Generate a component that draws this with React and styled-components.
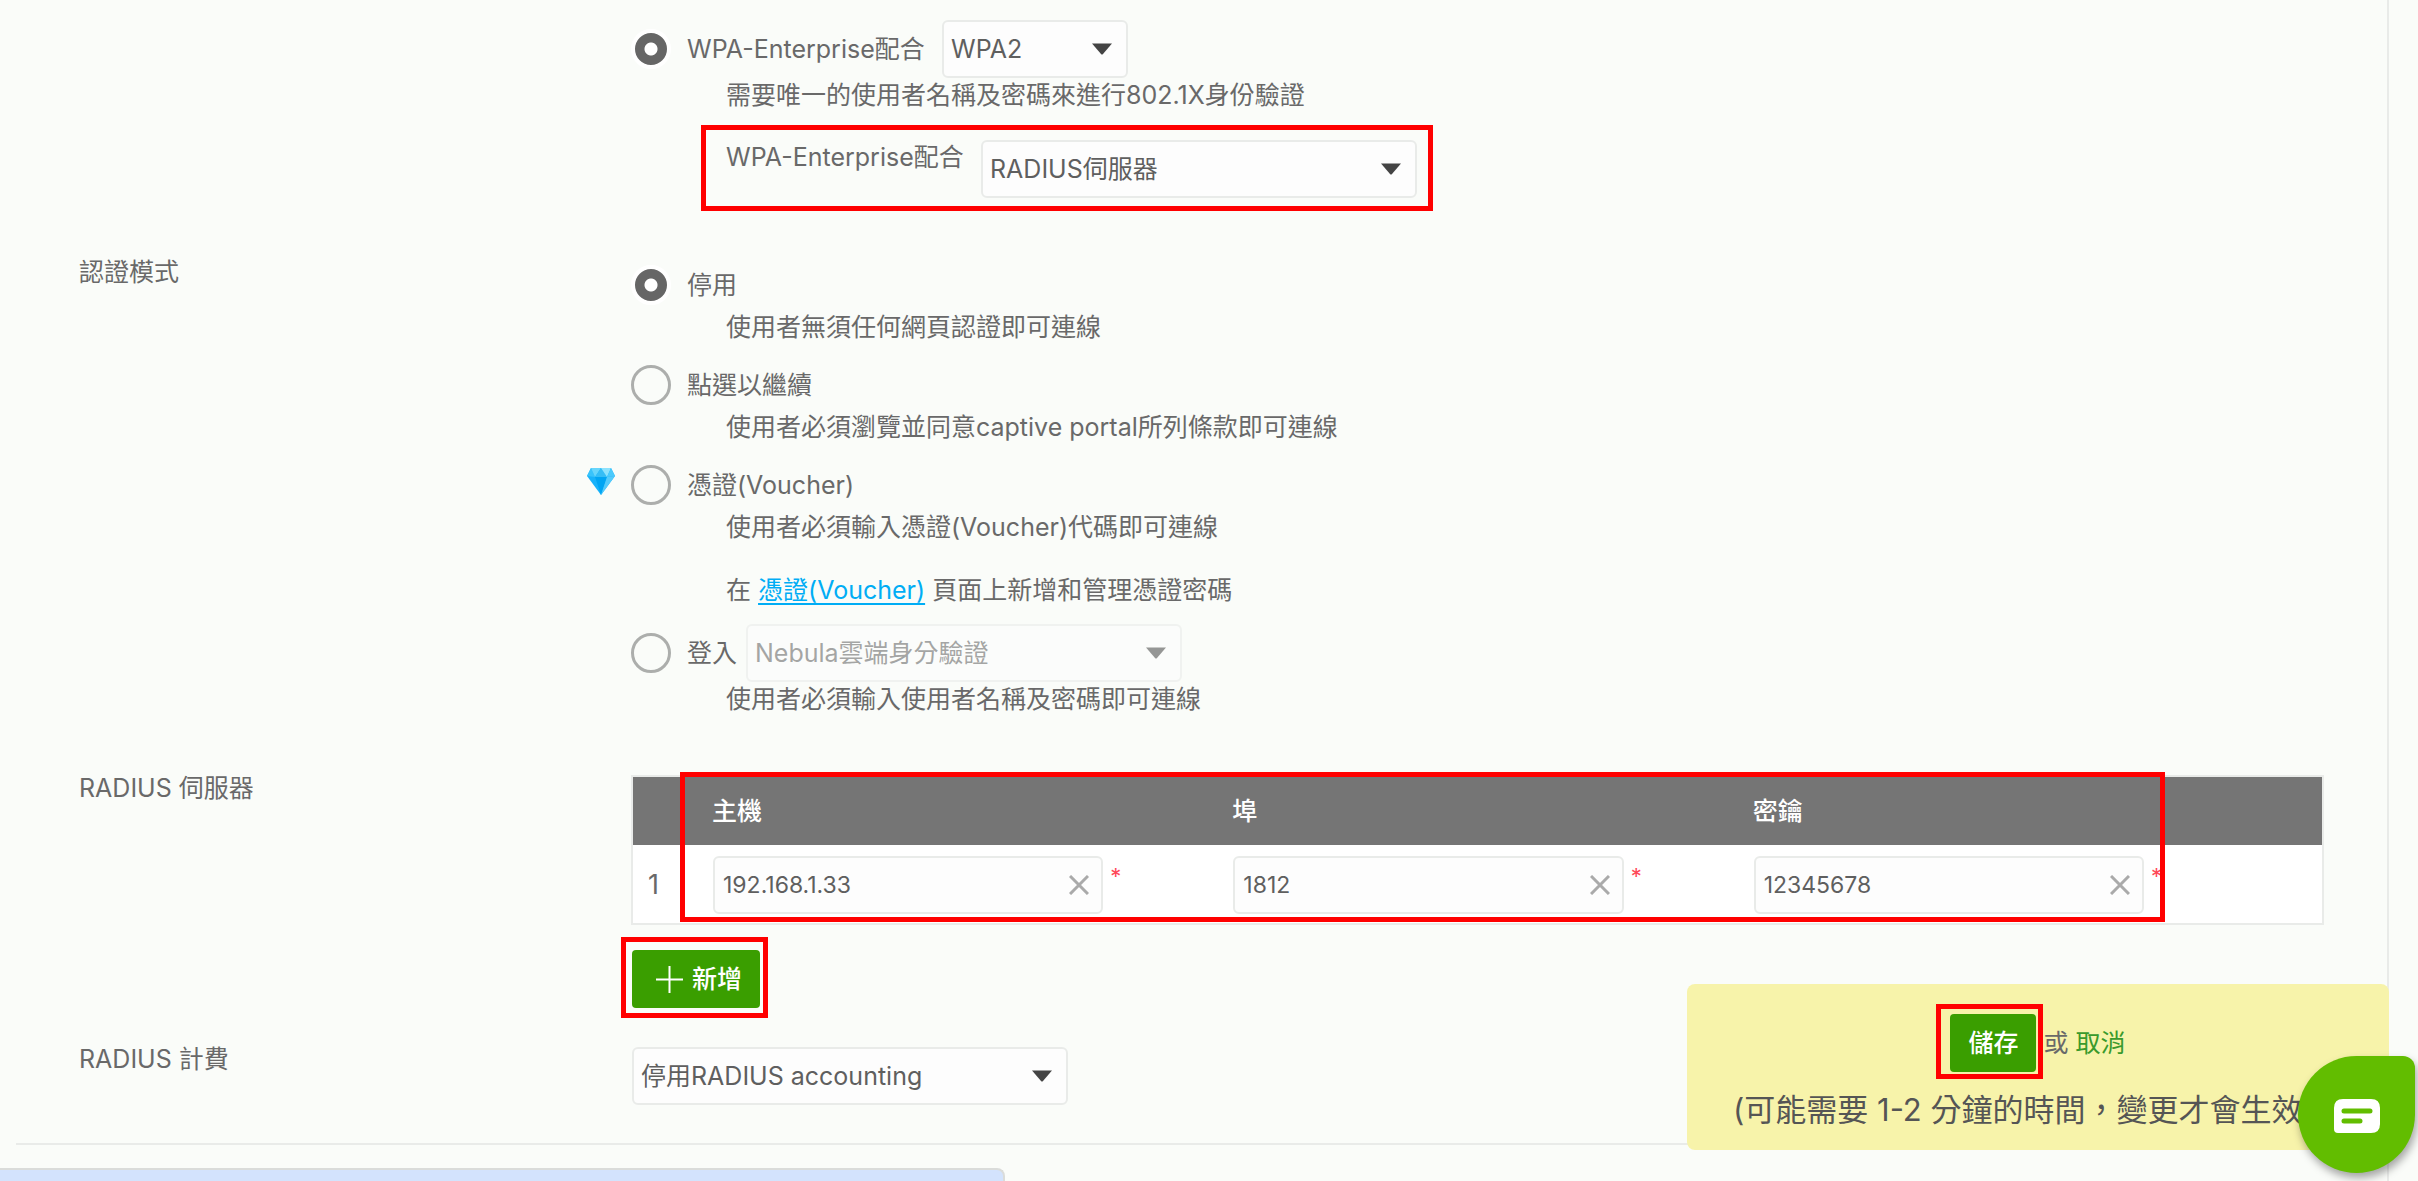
import React from "react";
import styled, { createGlobalStyle, css } from "styled-components";

const GlobalStyle = createGlobalStyle`
  * { box-sizing: border-box; }
  body {
    margin: 0;
    background: #fafcf9;
    color: #696969;
    font-family: Inter, "Noto Sans CJK TC", sans-serif;
    font-size: 25px;
    line-height: 34px;
  }
  button, input, select { font-family: inherit; }
`;

const Panel = styled.main`
  min-height: 100vh;
  margin-right: 29px;
  padding: 14px 0 0 16px;
  border-right: 2px solid #e9ebe9;
`;

const Settings = styled.form`
  padding-bottom: 38px;
  border-bottom: 2px solid #e9ebe9;
`;

const Section = styled.section`
  display: grid;
  grid-template-columns: 553px minmax(0, 1fr);
  padding: 0 64px 0 63px;
  margin-top: ${(p) => p.$gap || 0}px;
`;

const SectionTitle = styled.div`
  padding-top: 1px;
`;

const Controls = styled.div`
  display: flex;
  flex-direction: column;
  gap: 16px;
  padding-top: 6px;
`;

const OptionRow = styled.div`
  position: relative;
  display: flex;
  align-items: center;
  min-height: 50px;
`;

const Radio = styled.input.attrs({ type: "radio" })`
  appearance: none;
  flex: none;
  width: 40px;
  height: 40px;
  margin: 0 16px 0 -1px;
  border: 3px solid #acaeac;
  border-radius: 50%;
  &:checked {
    border: 4px solid #fff;
    background: radial-gradient(circle, #fff 0 6px, #666 7px);
  }
`;

const OptionLabel = styled.label`
  min-width: ${(p) => p.$width || 0}px;
  margin-right: 9px;
`;

const Hint = styled.p`
  margin: 0 0 0 94px;
`;

const Note = styled(Hint)`
  margin-top: 28px;
  line-height: 36px;
`;

const VoucherLink = styled.a`
  color: #00adf5;
  text-decoration: underline;
  text-decoration-thickness: 2px;
  text-underline-offset: 4px;
`;

const Nested = styled.div`
  position: relative;
  display: inline-flex;
  align-items: flex-start;
  margin: 28px 0 0 94px;
`;

const Premium = styled.svg`
  position: absolute;
  left: -45px;
  top: 7px;
`;

const Highlight = styled.span`
  position: absolute;
  inset: ${(p) => p.$inset};
  z-index: 1;
  border: 5px solid #f00;
  pointer-events: none;
`;

const fieldBox = css`
  width: 100%;
  height: 58px;
  border: 2px solid #e9ebe9;
  border-radius: 6px;
  background: #fdfdfd;
  color: #5f5f5f;
`;

const SelectWrap = styled.span`
  position: relative;
  display: block;
  width: ${(p) => p.$width}px;
  opacity: ${(p) => (p.$muted ? 0.55 : 1)};
`;

const SelectBox = styled.select`
  ${fieldBox}
  appearance: none;
  padding: 0 48px 0 7px;
  font-size: 25px;
  opacity: 1;
`;

const Caret = styled.svg`
  position: absolute;
  right: 15px;
  top: 23px;
  pointer-events: none;
`;

const TableWrap = styled.div`
  position: relative;
`;

const Table = styled.table`
  width: 100%;
  table-layout: fixed;
  border-collapse: collapse;
  background: #fff;
  outline: 2px solid #e9ebe9;
  outline-offset: -1px;
`;

const HeadCell = styled.th`
  width: ${(p) => p.$width || "auto"};
  height: 69px;
  padding: 0 12px;
  background: #757575;
  color: #fff;
  font-weight: 500;
  text-align: left;
`;

const Cell = styled.td`
  height: 79px;
  padding: 0 0 0 13px;
`;

const IndexCell = styled(Cell)`
  padding-left: 16px;
  font-size: 27px;
`;

const Field = styled.div`
  display: flex;
  align-items: center;
  gap: 7px;
  padding-right: 100px;
`;

const InputWrap = styled.div`
  position: relative;
  flex: 1;
`;

const TextInput = styled.input`
  ${fieldBox}
  display: block;
  padding: 0 48px 0 8px;
  font-size: 23px;
`;

const ClearButton = styled.button`
  position: absolute;
  right: 10px;
  top: 15px;
  display: flex;
  width: 28px;
  height: 28px;
  padding: 4px;
  border: 0;
  background: none;
`;

const Required = styled.span`
  align-self: flex-start;
  width: 10px;
  padding-top: 3px;
  color: #ff4757;
  font-size: 22px;
`;

const ButtonSlot = styled.div`
  position: relative;
  align-self: flex-start;
  margin-top: ${(p) => p.$top || 0}px;
`;

const GreenButton = styled.button`
  display: flex;
  align-items: center;
  gap: 9px;
  height: 58px;
  padding: ${(p) => p.$pad};
  border: 0;
  border-radius: 4px;
  background: #3a9e00;
  color: #fff;
  font-size: 25px;
  font-weight: 500;
`;

const PlusIcon = styled.svg`
  margin-top: 4px;
`;

const SaveBanner = styled.aside`
  position: fixed;
  right: 29px;
  bottom: 31px;
  display: flex;
  flex-direction: column;
  align-items: center;
  gap: 20px;
  width: 702px;
  height: 166px;
  padding: 30px 46px 0;
  border-radius: 8px;
  background: #f7f3aa;
`;

const SaveActions = styled.div`
  display: flex;
  align-items: center;
  gap: 7px;
`;

const CancelLink = styled.a`
  color: #3a9a2c;
  text-decoration: none;
`;

const SaveHint = styled.p`
  align-self: flex-start;
  margin: 0;
  color: #555;
  font-size: 31px;
  line-height: 36px;
  white-space: nowrap;
`;

const ChatButton = styled.button`
  position: fixed;
  right: 3px;
  bottom: 8px;
  display: flex;
  align-items: center;
  justify-content: center;
  width: 117px;
  height: 117px;
  padding: 3px 0 0;
  border: 0;
  border-radius: 50% 12px 50% 50%;
  background: #62bd00;
  box-shadow: 2px 5px 8px rgba(0, 0, 0, 0.35);
`;

const StatusBar = styled.div`
  position: fixed;
  left: 0;
  bottom: 0;
  width: 1005px;
  height: 13px;
  border-top: 2px solid #dadcda;
  border-right: 2px solid #dadcda;
  border-top-right-radius: 8px;
  background: #d3e3fd;
`;

function Dropdown({ id, label, value, width, disabled }) {
  return (
    <SelectWrap $width={width} $muted={disabled}>
      <SelectBox id={id} aria-label={label} disabled={disabled} defaultValue={value}>
        <option>{value}</option>
      </SelectBox>
      <Caret width="22" height="12" viewBox="0 0 22 12" aria-hidden="true">
        <path d="M1 0.5H21L12 11Q11 12 10 11Z" fill="#444" />
      </Caret>
    </SelectWrap>
  );
}

function Option({ id, name, label, labelWidth, checked, premium, hint, children }) {
  return (
    <div>
      <OptionRow>
        {premium && (
          <Premium width="28" height="28" viewBox="0 0 28 28" aria-hidden="true">
            <path d="M4 1H24L28 9L14 28L0 9Z" fill="#18b2fa" />
            <path d="M4 1L8 10L0 9Z" fill="#38c3fb" />
            <path d="M4 1H14L8 10Z" fill="#67d5fb" />
            <path d="M14 1L20 10H8Z" fill="#35bdf5" />
            <path d="M14 1H24L20 10Z" fill="#8ce2fd" />
            <path d="M24 1L28 9L20 10Z" fill="#4bcafc" />
            <path d="M8 10H20L14 28Z" fill="#00a5f3" />
            <path d="M20 10L28 9L14 28Z" fill="#55cbfb" />
          </Premium>
        )}
        <Radio id={id} name={name} defaultChecked={checked} />
        <OptionLabel htmlFor={id} $width={labelWidth}>
          {label}
        </OptionLabel>
        {children}
      </OptionRow>
      <Hint>{hint}</Hint>
    </div>
  );
}

function ServerField({ label, value }) {
  return (
    <Cell>
      <Field>
        <InputWrap>
          <TextInput aria-label={label} defaultValue={value} />
          <ClearButton type="button" aria-label={`清除${label}`}>
            <svg width="20" height="20" viewBox="0 0 20 20" fill="none" stroke="#aaa" strokeWidth="3">
              <path d="M1 1L19 19M19 1L1 19" />
            </svg>
          </ClearButton>
        </InputWrap>
        <Required>*</Required>
      </Field>
    </Cell>
  );
}

const servers = [{ host: "192.168.1.33", port: "1812", secret: "12345678" }];

export default function App() {
  return (
    <>
      <GlobalStyle />
      <Panel>
        <Settings onSubmit={(e) => e.preventDefault()}>
          <Section>
            <SectionTitle />
            <Controls>
              <div>
                <Option
                  id="wpa"
                  name="security"
                  label="WPA-Enterprise配合"
                  labelWidth={246}
                  checked
                  hint="需要唯一的使用者名稱及密碼來進行802.1X身份驗證"
                >
                  <Dropdown label="WPA" value="WPA2" width={186} />
                </Option>
                <Nested>
                  <OptionLabel htmlFor="auth-server" $width={246}>
                    WPA-Enterprise配合
                  </OptionLabel>
                  <Dropdown id="auth-server" value="RADIUS伺服器" width={436} />
                  <Highlight $inset="-15px -16px -13px -25px" />
                </Nested>
              </div>
            </Controls>
          </Section>

          <Section $gap={56}>
            <SectionTitle>認證模式</SectionTitle>
            <Controls>
              <Option id="off" name="mode" label="停用" checked hint="使用者無須任何網頁認證即可連線" />
              <Option
                id="click"
                name="mode"
                label="點選以繼續"
                hint="使用者必須瀏覽並同意captive portal所列條款即可連線"
              />
              <div>
                <Option
                  id="voucher"
                  name="mode"
                  label="憑證(Voucher)"
                  premium
                  hint="使用者必須輸入憑證(Voucher)代碼即可連線"
                />
                <Note>
                  在 <VoucherLink href="#voucher">憑證(Voucher)</VoucherLink> 頁面上新增和管理憑證密碼
                </Note>
              </div>
              <Option id="login" name="mode" label="登入" hint="使用者必須輸入使用者名稱及密碼即可連線">
                <Dropdown label="登入" value="Nebula雲端身分驗證" width={436} disabled />
              </Option>
            </Controls>
          </Section>

          <Section $gap={54}>
            <SectionTitle>RADIUS 伺服器</SectionTitle>
            <Controls>
              <TableWrap>
                <Table>
                  <thead>
                    <tr>
                      <HeadCell $width="68px" />
                      <HeadCell>主機</HeadCell>
                      <HeadCell>埠</HeadCell>
                      <HeadCell>密鑰</HeadCell>
                      <HeadCell $width="62px" />
                    </tr>
                  </thead>
                  <tbody>
                    {servers.map((s, i) => (
                      <tr key={s.host}>
                        <IndexCell>{i + 1}</IndexCell>
                        <ServerField label="主機" value={s.host} />
                        <ServerField label="埠" value={s.port} />
                        <ServerField label="密鑰" value={s.secret} />
                        <Cell />
                      </tr>
                    ))}
                  </tbody>
                </Table>
                <Highlight $inset="-4px 158px 2px 48px" />
              </TableWrap>
              <ButtonSlot $top={10}>
                <GreenButton type="button" $pad="0 18px 4px 24px">
                  <PlusIcon width="27" height="27" viewBox="0 0 27 27" stroke="#fff" strokeWidth="2" aria-hidden="true">
                    <path d="M13.5 0V27M0 13.5H27" />
                  </PlusIcon>
                  新增
                </GreenButton>
                <Highlight $inset="-13px -8px -10px -11px" />
              </ButtonSlot>
            </Controls>
          </Section>

          <Section $gap={33}>
            <SectionTitle as="label" htmlFor="accounting">
              RADIUS 計費
            </SectionTitle>
            <Controls>
              <Dropdown id="accounting" value="停用RADIUS accounting" width={436} />
            </Controls>
          </Section>
        </Settings>
      </Panel>

      <StatusBar />

      <SaveBanner>
        <SaveActions>
          <ButtonSlot>
            <GreenButton type="button" $pad="0 18px 4px">
              儲存
            </GreenButton>
            <Highlight $inset="-10px -7px -7px -14px" />
          </ButtonSlot>
          <span>
            或 <CancelLink href="#cancel">取消</CancelLink>
          </span>
        </SaveActions>
        <SaveHint>(可能需要 1-2 分鐘的時間，變更才會生效)</SaveHint>
      </SaveBanner>

      <ChatButton type="button" aria-label="線上客服">
        <svg width="46" height="34" viewBox="0 0 46 34" aria-hidden="true">
          <path d="M9 0H37Q46 0 46 9V25Q46 34 37 34H4Q0 34 0 30V9Q0 0 9 0Z" fill="#fff" />
          <path d="M10 12H36M10 22H26" stroke="#62bd00" strokeWidth="5" strokeLinecap="round" />
        </svg>
      </ChatButton>
    </>
  );
}
